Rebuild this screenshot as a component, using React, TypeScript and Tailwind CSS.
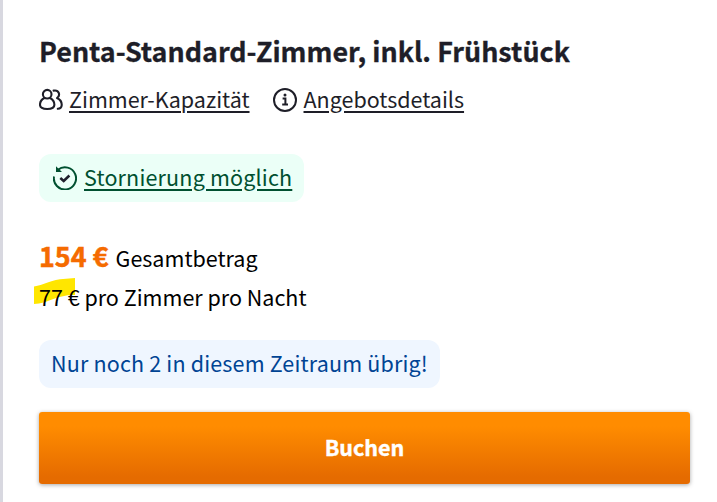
const GuestsIcon = () => (
  <svg className="h-6 w-6 shrink-0" viewBox="0 0 24 24" fill="none" stroke="currentColor" strokeWidth="2.1" strokeLinecap="round" strokeLinejoin="round">
    <circle cx="8.2" cy="6.2" r="4.3" />
    <path d="M5.4 10C2.8 11.3 1 13.9 1 16.8C1 19.7 3.8 21 8.2 21S15.4 19.7 15.4 16.8C15.4 13.9 13.6 11.3 11 10" />
    <path d="M14.6 2.6C20.1 1.5 21.7 7.5 18 10C21 11.4 22.9 14.4 22.7 17.2C22.6 19.4 21 20.6 18.8 20.8" />
  </svg>
);

const InfoIcon = () => (
  <svg className="h-6 w-6 shrink-0" viewBox="0 0 24 24" fill="none" stroke="currentColor" strokeWidth="2">
    <circle cx="12" cy="12" r="11" />
    <path d="M9.6 10.6H12.4V16.6M9.2 16.6H15" />
    <circle cx="12" cy="7" r="1.5" fill="currentColor" stroke="none" />
  </svg>
);

const CancelIcon = () => (
  <svg className="h-6 w-6 shrink-0" viewBox="0 0 24 24" fill="none" stroke="currentColor" strokeWidth="2">
    <path d="M1 10.5A11.1 11.1 0 1 0 5 3.7" />
    <path d="M3 0.2V6H9L7.2 4.2L4.8 2Z" fill="currentColor" stroke="none" />
    <path d="M7.3 12L10.7 15L16.4 9.5" stroke="#20202c" strokeWidth="2.5" />
  </svg>
);

const Highlight = () => (
  <svg className="absolute -left-[5px] top-0 -z-10 h-[27px] w-[41px]" viewBox="0 0 41 27">
    <path d="M0 8.5C10 7 14 3 26 1.3L41 0V17C27 16 14 24 5 25.5L0 26Z" fill="#ffe600" />
  </svg>
);

export default function App() {
  return (
    <div className="h-[502px] w-[717px] overflow-hidden border-l-[3px] border-[#d8d8e0] bg-white pl-9 pr-[27px] pt-[31px] font-['Noto_Sans_CJK_SC','Noto_Sans',sans-serif] text-[21.5px] text-[#1e1e28]">
      <h2 className="h-10 whitespace-nowrap text-[26.9px] font-bold leading-10 [-webkit-text-stroke:0.3px_#1e1e28]">
        Penta-Standard-Zimmer, inkl. Frühstück
      </h2>
      <div className="mt-[9px] flex h-10 items-center gap-[23px] leading-9">
        <a className="flex items-center gap-1.5">
          <GuestsIcon />
          <span className="relative -top-px underline decoration-2 underline-offset-[3px]">Zimmer-Kapazität</span>
        </a>
        <a className="flex items-center gap-[7px]">
          <InfoIcon />
          <span className="relative -top-px underline decoration-2 underline-offset-[3px]">Angebotsdetails</span>
        </a>
      </div>
      <div className="mt-[34px] flex h-12 w-[265px] items-center gap-[7px] rounded-xl bg-[#ebfff7] pl-3.5 text-[#005030]">
        <CancelIcon />
        <span className="whitespace-nowrap pb-0.5 leading-9 tracking-[0.18px] underline decoration-2 underline-offset-[3px]">Stornierung möglich</span>
      </div>
      <div className="mt-[34px] flex h-10 items-baseline gap-[7px] leading-10 text-black">
        <span className="text-[26.9px] font-bold text-[#f56b00] [-webkit-text-stroke:0.5px_#f56b00]">154 €</span>
        <span>Gesamtbetrag</span>
      </div>
      <div className="relative z-0 mt-0.5 h-[27px] whitespace-nowrap leading-[37px] text-black">
        <Highlight />
        77 € pro Zimmer pro Nacht
      </div>
      <div className="mt-[35px] h-12 w-[401px] whitespace-nowrap rounded-xl bg-[#eff6ff] pl-3 leading-[45px] tracking-[0.17px] text-[#004494]">
        Nur noch 2 in diesem Zeitraum übrig!
      </div>
      <button className="mt-6 block h-[72px] w-full rounded-[3px] bg-linear-to-b from-[#ff8c00] from-20% to-[#e56b00] to-90% pb-0.5 text-[21.5px] font-bold text-white shadow-[0_1px_4px_rgba(0,0,0,0.35)] [-webkit-text-stroke:0.4px_#fff]">
        Buchen
      </button>
    </div>
  );
}
